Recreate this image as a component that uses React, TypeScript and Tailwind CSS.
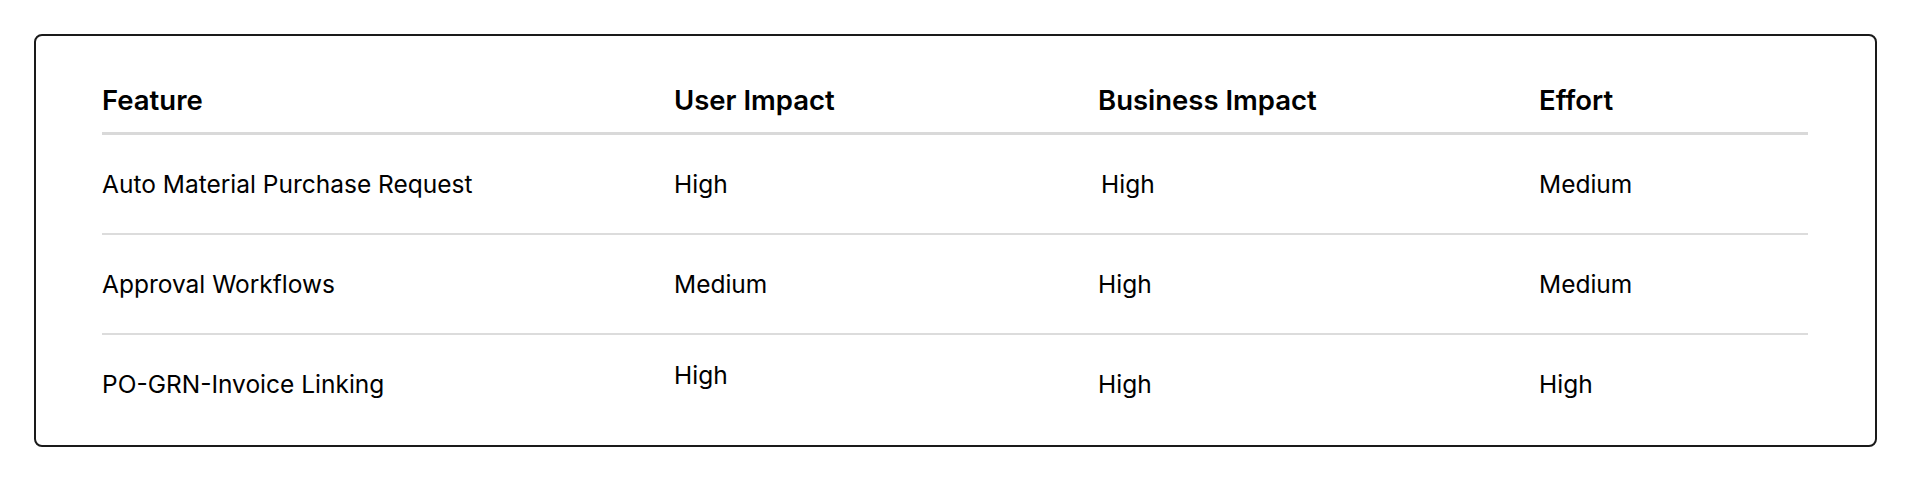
import React from 'react';

interface FeatureRow {
  feature: string;
  userImpact: string;
  businessImpact: string;
  effort: string;
}

const rows: FeatureRow[] = [
  { feature: 'Auto Material Purchase Request', userImpact: 'High', businessImpact: 'High', effort: 'Medium' },
  { feature: 'Approval Workflows', userImpact: 'Medium', businessImpact: 'High', effort: 'Medium' },
  { feature: 'PO-GRN-Invoice Linking', userImpact: 'High', businessImpact: 'High', effort: 'High' },
];

const cols = 'grid grid-cols-[572px_424px_441px_1fr]';

const App: React.FC = () => {
  return (
    <div className="min-h-screen bg-white pt-[34px] pl-[34px] font-['Inter',sans-serif] text-black">
      <div className="w-[1843px] rounded-lg border-2 border-[#1a1a1a] pt-[49px] pb-[12px] pl-[66px] pr-[67px]">
        <div className={`${cols} border-b-[3px] border-[#d9d9d9] pb-4 text-[27.5px] font-semibold leading-[31px]`}>
          <div>Feature</div>
          <div>User Impact</div>
          <div>Business Impact</div>
          <div>Effort</div>
        </div>
        {rows.map((row, i) => (
          <div
            key={row.feature}
            className={`${cols} h-[98px] items-center text-[24.5px] leading-[1.5] ${
              i < rows.length - 1 ? 'box-content border-b-2 border-[#dcdcdc]' : ''
            }`}
          >
            <div>{row.feature}</div>
            <div className={i === 2 ? 'pb-[17px]' : ''}>{row.userImpact}</div>
            <div className={i === 0 ? 'pl-[3px]' : ''}>{row.businessImpact}</div>
            <div>{row.effort}</div>
          </div>
        ))}
      </div>
    </div>
  );
};

export default App;
